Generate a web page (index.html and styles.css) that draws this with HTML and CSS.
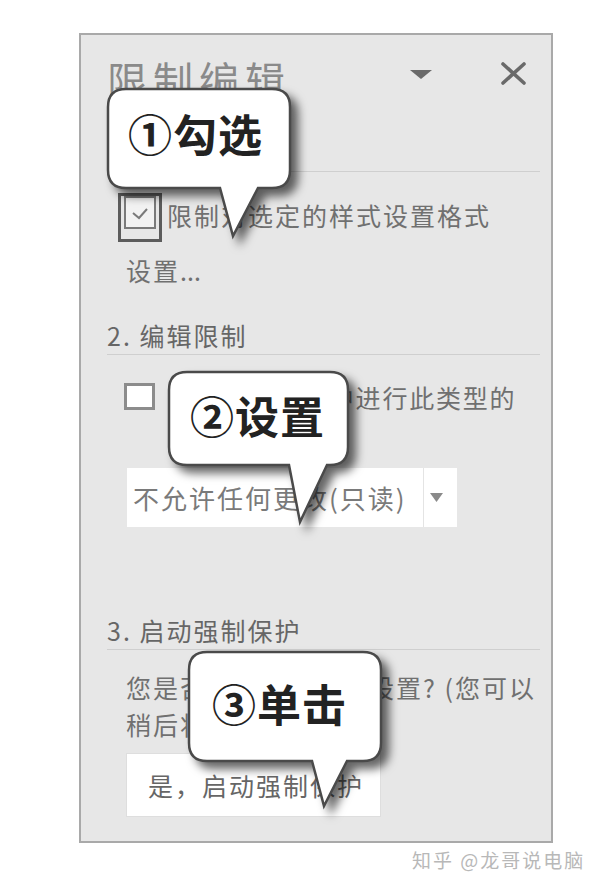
FILE: index.html
```html
<!DOCTYPE html>
<html lang="zh-CN">
  <head>
    <meta charset="UTF-8">
    <meta name="viewport" content="width=device-width,initial-scale=1.0">
    <title>限制编辑</title>
    <link rel="stylesheet" href="styles.css">
  </head>
  <body>
    <div class="pane">
      <div class="pane-head">
        <h1 class="pane-title">限制编辑</h1>
        <svg class="icon-menu" width="22" height="9" viewBox="0 0 22 9"><polygon points="0,0 22,0 11,9" fill="#6a6a6a"/></svg>
        <svg class="icon-close" width="27" height="23" viewBox="0 0 27 23"><path d="M3 2 L24 21 M24 2 L3 21" stroke="#6a6a6a" stroke-width="3.6" stroke-linecap="round"/></svg>
      </div>

      <section class="group">
        <h2 class="group-title">1. 格式化限制</h2>
        <label class="check check-on">
          <svg width="44" height="49" viewBox="0 0 44 49"><rect x="1.5" y="1.5" width="41" height="46" fill="none" stroke="#5c5c5c" stroke-width="3"/><rect x="7" y="4" width="30" height="31" fill="#f2f2f2" stroke="#7a7a7a" stroke-width="2"/><path d="M15 20 L21 25 L29 16" fill="none" stroke="#7a7a7a" stroke-width="2"/></svg>
          <span class="check-text">限制对选定的样式设置格式</span>
        </label>
        <a class="link">设置<span class="dots">...</span></a>
      </section>

      <section class="group">
        <h2 class="group-title">2. 编辑限制</h2>
        <label class="check check-off">
          <span class="box"></span>
          <span class="check-text">仅允许在文档中进行此类型的<br>编辑:</span>
        </label>
        <div class="select">
          <span class="select-value">不允许任何更改(只读)</span>
          <span class="select-arrow"><svg width="13" height="9" viewBox="0 0 13 9"><polygon points="0,0 13,0 6.5,9" fill="#8a8a8a"/></svg></span>
        </div>
      </section>

      <section class="group">
        <h2 class="group-title">3. 启动强制保护</h2>
        <p class="note">您是否准备应用这些设置? (您可以<br>稍后将其关闭)</p>
        <button class="start">是，启动强制保护</button>
      </section>

      <!-- callouts sit over the pane -->
      <div class="callout c1">
        <svg width="200" height="165" viewBox="0 0 200 165"><path d="M20 2 H166 Q184 2 184 20 V83 Q184 101 166 101 H152 L127 149 L114 101 H20 Q2 101 2 83 V20 Q2 2 20 2 Z" fill="#fff" stroke="#4a4a4a" stroke-width="2.5"/></svg>
        <span class="callout-text">①勾选</span>
      </div>
      <div class="callout c2">
        <svg width="200" height="165" viewBox="0 0 200 165"><path d="M20 2 H163 Q181 2 181 20 V77 Q181 95 163 95 H160 L133 152 L122 95 H20 Q2 95 2 77 V20 Q2 2 20 2 Z" fill="#fff" stroke="#4a4a4a" stroke-width="2.5"/></svg>
        <span class="callout-text">②设置</span>
      </div>
      <div class="callout c3">
        <svg width="210" height="170" viewBox="0 0 210 170"><path d="M20 2 H176 Q194 2 194 20 V93 Q194 111 176 111 H160 L137 156 L125 111 H20 Q2 111 2 93 V20 Q2 2 20 2 Z" fill="#fff" stroke="#4a4a4a" stroke-width="2.5"/></svg>
        <span class="callout-text">③单击</span>
      </div>
    </div>
    <div class="credit">知乎 @龙哥说电脑</div>
  </body>
</html>
```

FILE: styles.css
```css
:root{--pane:#e7e7e7;--text:#707070;--rule:#cfcfcf}
*{box-sizing:border-box}
body{margin:0;background:#fff;font-family:"Noto Sans CJK SC","Noto Sans",sans-serif;color:var(--text)}
.pane{position:relative;width:474px;height:810px;margin:33px 0 0 79px;padding:22px 11px 0 26px;background:var(--pane);border:2px solid #a9a9a9}
.pane-head{display:flex;align-items:flex-start;height:44px;padding-right:13px}
.pane-title{margin:0;font-size:40px;line-height:44px;font-weight:400;letter-spacing:6px;color:#8a8a8a}
.icon-menu{margin:13px 68px 0 auto}
.icon-close{margin-top:5px}
.group-title{margin:34px 0 0;font-size:25px;line-height:30px;font-weight:400;letter-spacing:2px;color:#666;padding-bottom:6px;border-bottom:1px solid var(--rule)}
.group:nth-of-type(2) .group-title{margin-top:32px;padding-bottom:4px}
.group:nth-of-type(3) .group-title{margin-top:88px;padding-bottom:4px}
.check{display:flex;align-items:flex-start;font-size:25px;letter-spacing:2px}
.check-on{margin:21px 0 0 11px;gap:5px;line-height:44px}
.check-off{margin:23px 0 0 17px;gap:13px;line-height:38px;letter-spacing:1.8px}
.box{flex:none;width:31px;height:27px;margin-top:5px;background:#fff;border:3px solid #8c8c8c}
.link{display:block;margin-top:10px;padding-left:19px;font-size:25px;line-height:36px;letter-spacing:2px}
.dots{letter-spacing:0}
.select{display:flex;width:330px;height:59px;margin:14px 0 0 20px;background:#fff}
.select-value{flex:1;padding-left:6px;font-size:26px;line-height:59px;letter-spacing:2px;color:#7a7a7a}
.select-arrow{display:flex;align-items:center;justify-content:center;width:34px;padding-right:8px;border-left:1px solid #e4e4e4}
.note{margin:19px 0 0 19px;font-size:25px;line-height:37px;letter-spacing:2px}
.start{display:block;width:255px;height:64px;margin:10px 0 0 19px;padding:0 0 0 21px;text-align:left;background:#fff;border:1px solid #dedede;font-family:inherit;font-size:25px;letter-spacing:2px;color:#666}
.callout{position:absolute}
.callout svg{display:block;overflow:visible;filter:drop-shadow(7px 7px 5px rgba(0,0,0,.6))}
.callout-text{position:absolute;white-space:nowrap;font-size:44px;line-height:48px;font-weight:700;letter-spacing:1px;color:#222}
.c1{left:25px;top:52px}
.c1 .callout-text{left:22px;top:22px}
.c2{left:86px;top:335px}
.c2 .callout-text{left:23px;top:21px}
.c3{left:106px;top:615px}
.c3 .callout-text{left:25px;top:29px}
.credit{margin:5px 0 0 412px;font-size:19px;line-height:24px;letter-spacing:2px;color:#b8b8b8}
```
